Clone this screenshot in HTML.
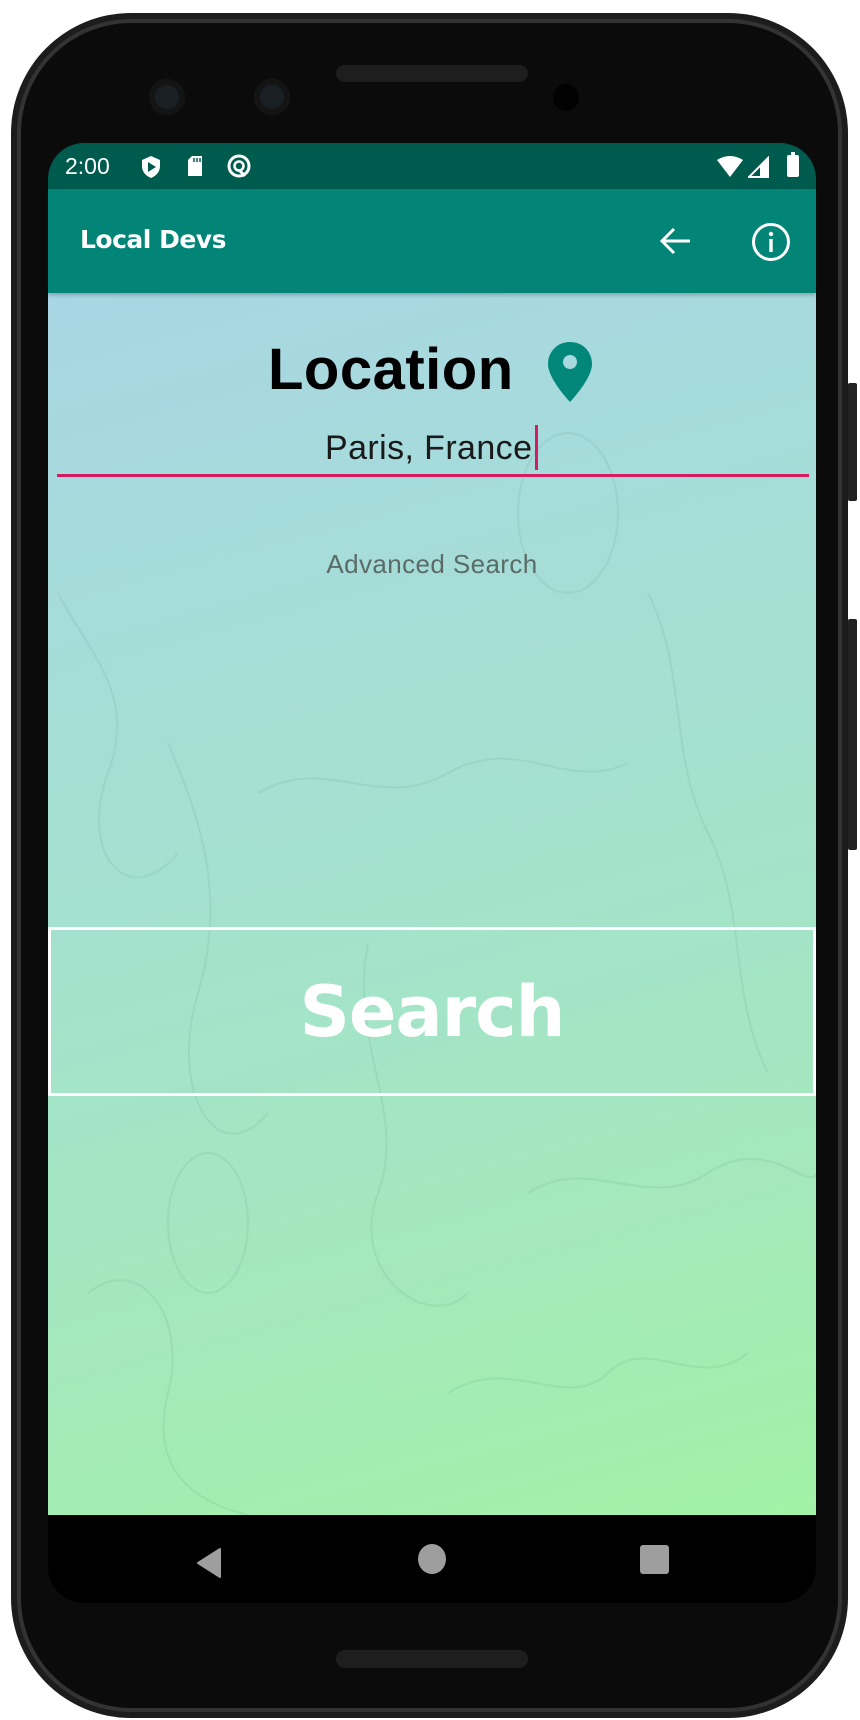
<!DOCTYPE html>
<html><head><meta charset="utf-8"><style>
html,body{margin:0;padding:0;background:#fff;width:860px;height:1720px;overflow:hidden;font-family:"Liberation Sans",sans-serif}
.abs{position:absolute}
</style></head><body>
<div class="abs" style="left:11px;top:13px;width:837px;height:1705px;border-radius:120px;background:#1c1c1c"></div>
<div class="abs" style="left:17px;top:19px;width:825px;height:1693px;border-radius:114px;background:#333"></div>
<div class="abs" style="left:21px;top:23px;width:817px;height:1685px;border-radius:110px;background:#0b0b0b"></div>
<div class="abs" style="left:848px;top:383px;width:9px;height:118px;background:#222;border-radius:2px"></div>
<div class="abs" style="left:848px;top:619px;width:9px;height:231px;background:#222;border-radius:2px"></div>
<div class="abs" style="left:336px;top:65px;width:192px;height:17px;border-radius:9px;background:#1e1e1e"></div>
<div class="abs" style="left:149px;top:79px;width:36px;height:36px;border-radius:50%;background:#1a1f24;box-shadow:inset 0 0 0 6px #141414"></div>
<div class="abs" style="left:254px;top:79px;width:36px;height:36px;border-radius:50%;background:#1a1f24;box-shadow:inset 0 0 0 6px #141414"></div>
<div class="abs" style="left:553px;top:84px;width:26px;height:27px;border-radius:50%;background:#020202"></div>
<div class="abs" style="left:336px;top:1650px;width:192px;height:18px;border-radius:9px;background:#1e1e1e"></div>

<div class="abs" style="left:48px;top:143px;width:768px;height:1460px;border-radius:36px;overflow:hidden;background:#000">
  <div class="abs" style="left:0;top:0;width:768px;height:46px;background:#005b4f"></div>
  <div class="abs" style="left:17px;top:10px;color:#fff;font-size:23px">2:00</div>
  <svg class="abs" style="left:92px;top:12px" width="22" height="24" viewBox="0 0 22 24"><path d="M11 1 L20 5 V11 C20 17 16 21 11 23 C6 21 2 17 2 11 V5 Z" fill="#fff"/><path d="M8 7 L16 12 L8 17Z" fill="#005b4f"/></svg>
  <svg class="abs" style="left:138px;top:12px" width="18" height="22" viewBox="0 0 18 22"><path d="M6 1 H16 V21 H2 V5 Z" fill="#fff"/><path d="M8 3v4M11 3v4M14 3v4" stroke="#005b4f" stroke-width="1.5"/></svg>
  <svg class="abs" style="left:178px;top:10px" width="26" height="26" viewBox="0 0 26 26"><circle cx="13" cy="13" r="10" fill="none" stroke="#fff" stroke-width="3"/><circle cx="13" cy="13" r="4.5" fill="none" stroke="#fff" stroke-width="2.5"/><path d="M13 17 L19 23" stroke="#fff" stroke-width="3"/></svg>
  <svg class="abs" style="left:668px;top:13px" width="28" height="22" viewBox="0 0 28 22"><path d="M1 4 Q14 -4 27 4 L14 21Z" fill="#fff"/></svg>
  <svg class="abs" style="left:700px;top:13px" width="22" height="22" viewBox="0 0 22 22"><path d="M20 2 V21 H1Z" fill="none" stroke="#fff" stroke-width="2"/><path d="M20 2 V21 H12 V10Z" fill="#fff"/></svg>
  <div class="abs" style="left:739px;top:12px;width:12px;height:22px;background:#fff;border-radius:2px"></div>
  <div class="abs" style="left:743px;top:9px;width:4px;height:4px;background:#fff"></div>

  <div class="abs" style="left:0;top:46px;width:768px;height:104px;background:#028576;box-shadow:0 2px 4px rgba(0,0,0,.25);z-index:2"></div>
  <div class="abs" style="left:32px;top:82px;color:#fff;font-family:'DejaVu Sans',sans-serif;font-size:25px;font-weight:bold;letter-spacing:-0.5px;z-index:3">Local Devs</div>
  <svg class="abs" style="left:610px;top:80px;z-index:3" width="36" height="36" viewBox="0 0 36 36"><path d="M32 18 H5 M16 6 L4 18 L16 30" fill="none" stroke="#fff" stroke-width="3"/></svg>
  <svg class="abs" style="left:703px;top:79px;z-index:3" width="40" height="40" viewBox="0 0 40 40"><circle cx="20" cy="20" r="17.5" fill="none" stroke="#fff" stroke-width="3"/><rect x="18.3" y="17" width="3.4" height="13" fill="#fff"/><circle cx="20" cy="12" r="2.2" fill="#fff"/></svg>

  <div class="abs" style="left:0;top:150px;width:768px;height:1222px;background:linear-gradient(165deg,#a8d6e4 0%,#a5e0d2 40%,#a4e8bc 75%,#a2f2a6 100%)">
    <svg class="abs" style="left:0;top:0" width="768" height="1222" viewBox="0 0 768 1222" fill="none" stroke="rgba(80,140,120,0.12)" stroke-width="2">
      <path d="M10 300 C40 360 90 400 60 480 C30 560 80 620 130 560"/>
      <path d="M120 450 C150 520 180 600 150 700 C120 800 170 880 220 820"/>
      <path d="M210 500 C280 460 330 520 400 480 C470 440 520 500 580 470"/>
      <path d="M320 650 C300 750 360 820 330 900 C300 980 380 1040 420 1000"/>
      <path d="M600 300 C640 380 620 460 660 540 C700 620 680 700 720 780"/>
      <path d="M480 900 C540 860 600 920 660 880 C720 840 760 900 769 880"/>
      <path d="M40 1000 C90 960 140 1020 120 1100 C100 1180 150 1210 200 1222"/>
      <path d="M400 1100 C460 1060 520 1120 560 1080 C600 1040 650 1100 700 1060"/>
      <ellipse cx="160" cy="930" rx="40" ry="70"/>
      <ellipse cx="520" cy="220" rx="50" ry="80"/>
    </svg>
  </div>

  <div class="abs" style="left:0;top:1372px;width:768px;height:88px;background:#000"></div>
  <svg class="abs" style="left:146px;top:1404px" width="30" height="32" viewBox="0 0 30 32"><path d="M26 2 V30 L4 16Z" fill="#9e9e9e" stroke="#9e9e9e" stroke-width="2" stroke-linejoin="round"/></svg>
  <div class="abs" style="left:370px;top:1401px;width:28px;height:30px;border-radius:50%;background:#9e9e9e"></div>
  <div class="abs" style="left:592px;top:1402px;width:29px;height:29px;border-radius:3px;background:#9e9e9e"></div>
</div>

<div class="abs" style="left:268px;top:335px;font-size:58px;font-weight:bold;color:#000;line-height:70px;letter-spacing:0.5px">Location</div>
<svg class="abs" style="left:547px;top:341px" width="46" height="62" viewBox="0 0 46 62"><path d="M23 1 C10 1 1 11 1 23 C1 38 23 61 23 61 C23 61 45 38 45 23 C45 11 36 1 23 1Z" fill="#00877a"/><circle cx="23" cy="21" r="7" fill="#a8d8e0"/></svg>
<div class="abs" style="left:325px;top:428px;font-size:34px;color:#1a1a1a;line-height:40px;letter-spacing:0.4px">Paris, France</div>
<div class="abs" style="left:535px;top:425px;width:3px;height:45px;background:#d81b60"></div>
<div class="abs" style="left:57px;top:474px;width:752px;height:3px;background:#d81b60"></div>
<div class="abs" style="left:0;top:549px;width:864px;text-align:center;font-size:26px;color:#5b6b67;letter-spacing:0.4px;line-height:30px">Advanced Search</div>

<div class="abs" style="left:48px;top:927px;width:762px;height:163px;border:3px solid #fff"></div>
<div class="abs" style="left:0;top:970px;width:864px;text-align:center;font-family:'DejaVu Sans',sans-serif;font-size:70px;font-weight:bold;color:#fff;letter-spacing:-1px;line-height:84px">Search</div>
</body></html>
